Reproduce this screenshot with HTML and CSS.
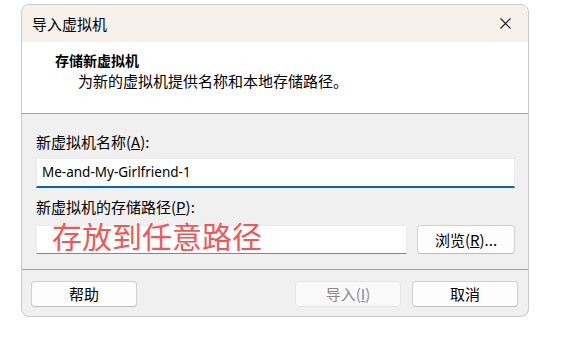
FILE: index.html
```html
<!DOCTYPE html>
<html lang="zh-CN">

<head>
    <meta charset="UTF-8">
    <meta name="viewport" content="width=device-width, initial-scale=1.0">
    <title>导入虚拟机</title>
    <link rel="stylesheet" href="styles.css">
</head>

<body>

    <div class="dialog">
        <div class="titlebar">
            <span class="title">导入虚拟机</span>
            <button class="close" aria-label="关闭">
                <svg width="11" height="11" viewBox="0 0 11 11">
                    <path d="M0.5 0.5 L10.5 10.5 M10.5 0.5 L0.5 10.5" stroke="#1a1a1a" stroke-width="1.1" fill="none"/>
                </svg>
            </button>
        </div>

        <div class="header">
            <div class="heading">存储新虚拟机</div>
            <div class="subheading">为新的虚拟机提供名称和本地存储路径。</div>
        </div>

        <div class="content">
            <label class="label">新虚拟机名称(<u>A</u>):</label>
            <div class="input active">Me-and-My-Girlfriend-1</div>

            <label class="label second">新虚拟机的存储路径(<u>P</u>):</label>
            <div class="path-row">
                <div class="input path"></div>
                <button class="btn browse">浏览(<u>R</u>)...</button>
                <div class="note">存放到任意路径</div>
            </div>
        </div>

        <div class="footer">
            <button class="btn">帮助</button>
            <div class="spacer"></div>
            <button class="btn disabled">导入(<u>I</u>)</button>
            <button class="btn">取消</button>
        </div>
    </div>

</body>

</html>
```

FILE: styles.css
```css
* {
    box-sizing: border-box;
}

body {
    margin: 0;
    background-color: #ffffff;
    font-family: "Noto Sans CJK SC", sans-serif;
    font-size: 15px;
    color: #000000;
}

.dialog {
    margin: 4px 0 0 21px;
    width: 508px;
    border: 1px solid #c9c9c9;
    border-radius: 8px;
    overflow: hidden;
    background-color: #f0f0f0;
}

.titlebar {
    height: 37px;
    background-color: #f7f1ec;
    display: flex;
    align-items: center;
    padding-left: 10px;
}

.title {
    flex: 1;
    line-height: 20px;
}

.close {
    width: 46px;
    height: 37px;
    border: none;
    background: none;
    display: flex;
    align-items: center;
    justify-content: center;
    padding: 0;
}

.header {
    height: 72px;
    background-color: #ffffff;
    border-bottom: 1px solid #a0a0a0;
    padding: 8px 0 0 33px;
}

.heading {
    font-weight: bold;
    line-height: 20px;
    font-size: 14px;
}

.subheading {
    margin: 1px 0 0 23px;
    line-height: 20px;
}

.content {
    padding: 18px 13px 15px 14px;
    border-bottom: 1px solid #a0a0a0;
}

.label {
    display: block;
    line-height: 20px;
}

.label.second {
    margin-top: 9px;
}

.input {
    margin-top: 6px;
    height: 30px;
    background-color: #ffffff;
    border: 1px solid #ececec;
    border-bottom: 2px solid #0067c0;
    padding: 0 5px;
    line-height: 27px;
    font-family: "Noto Sans", "Noto Sans CJK SC", sans-serif;
    font-size: 13.5px;
}

.path-row {
    position: relative;
    margin-top: 8px;
    display: flex;
    gap: 10px;
}

.input.path {
    margin-top: 0;
    flex: 1;
    height: 29px;
    border-bottom: 1px solid #868686;
}

.note {
    position: absolute;
    left: 16px;
    top: -5px;
    font-size: 30px;
    line-height: 30px;
    color: #f45656;
}

.btn {
    height: 29px;
    background-color: #fdfdfd;
    border: 1px solid #d0d0d0;
    border-bottom-color: #bdbdbd;
    border-radius: 4px;
    font-family: "Noto Sans CJK SC", sans-serif;
    font-size: 15px;
    color: #000000;
    padding: 0;
}

.browse {
    width: 98px;
}

.footer {
    display: flex;
    gap: 11px;
    padding: 11px 10px 9px 9px;
}

.footer .btn {
    width: 106px;
    height: 26px;
    line-height: 22px;
}

.spacer {
    flex: 1;
}

.btn.disabled {
    background-color: #f9f9f9;
    border-color: #e6e6e6;
    color: #8a8a8a;
}

.btn.disabled u {
    color: #6f8fb8;
}
```
